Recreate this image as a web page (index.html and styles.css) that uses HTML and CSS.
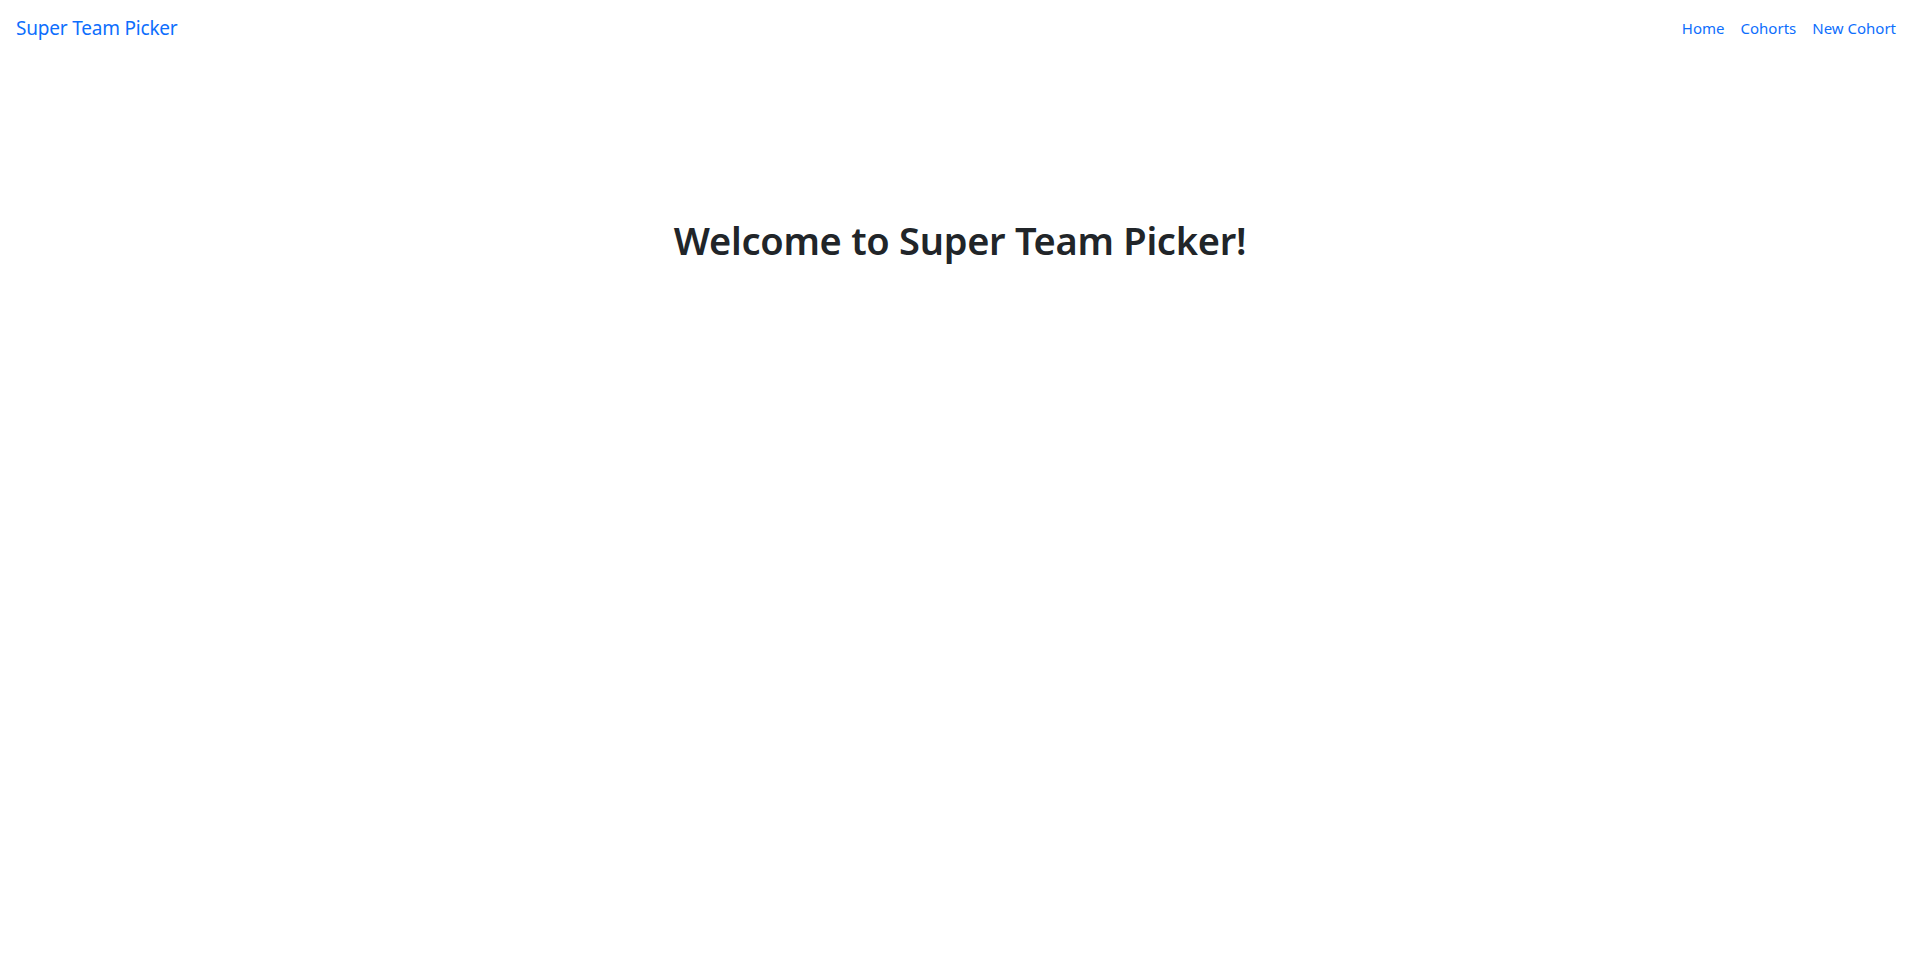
FILE: index.html
```html
<!DOCTYPE html>
<html lang="en">
<head>
<meta charset="utf-8">
<title>Super Team Picker</title>
<link rel="stylesheet" href="styles.css">
</head>
<body>
<nav class="navbar">
  <a class="brand" href="#">Super Team Picker</a>
  <div class="nav-links">
    <a class="nav-link" href="#">Home</a>
    <a class="nav-link" href="#">Cohorts</a>
    <a class="nav-link" href="#">New Cohort</a>
  </div>
</nav>
<main class="main">
  <h1 class="title">Welcome to Super Team Picker!</h1>
</main>
</body>
</html>
```

FILE: styles.css
```css
* { box-sizing: border-box; }
html, body { margin: 0; padding: 0; background: #fff; }
body {
  font-family: "Noto Sans", "Open Sans", sans-serif;
  color: #212529;
  font-size: 16px;
  line-height: 1.5;
}
a { text-decoration: none; color: #0d6efd; }
.navbar {
  display: flex;
  justify-content: space-between;
  align-items: center;
  padding: 8px 24px 8px 16px;
}
.brand {
  font-size: 19px;
  letter-spacing: -0.2px;
  line-height: 30px;
  padding: 5px 0;
}
.nav-links { display: flex; }
.nav-link {
  padding: 8px 8px;
  font-size: 15px;
  line-height: 24px;
}
.nav-link:last-child { padding-right: 0; }
.main {
  display: flex;
  justify-content: center;
  padding-top: 162px;
}
.title {
  margin: 0;
  font-size: 38px;
  letter-spacing: -0.28px;
  font-weight: 600;
  line-height: 1.2;
}
```
